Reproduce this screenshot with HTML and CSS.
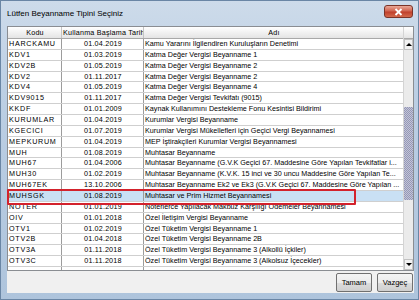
FILE: index.html
```html
<!doctype html>
<html>
  <head>
    <meta charset="utf-8">
    <title>Lütfen Beyanname Tipini Seçiniz</title>
    <link rel="stylesheet" href="styles.css">
  </head>
  <body>
    <div class="window">
      <div class="titlebar">
        <span class="title">Lütfen Beyanname Tipini Seçiniz</span>
        <div class="close">
          <svg width="9" height="8" viewBox="0 0 9 8"><path d="M1.5 1 L7.5 7 M7.5 1 L1.5 7" stroke="#fff" stroke-width="1.8"/></svg>
        </div>
      </div>
      <div class="client">
        <div class="grid">
          <div class="table">
            <div class="row head"><div>Kodu</div><div>Kullanma Başlama Tarihi</div><div>Adı</div></div>
            <div class="row"><div>HARCKAMU</div><div>01.04.2019</div><div>Kamu Yararını İlgilendiren Kuruluşların Denetimi</div></div>
            <div class="row"><div>KDV1</div><div>01.03.2019</div><div>Katma Değer Vergisi Beyanname 1</div></div>
            <div class="row"><div>KDV2B</div><div>01.05.2019</div><div>Katma Değer Vergisi Beyanname 2</div></div>
            <div class="row"><div>KDV2</div><div>01.11.2017</div><div>Katma Değer Vergisi Beyanname 2</div></div>
            <div class="row"><div>KDV4</div><div>01.05.2019</div><div>Katma Değer Vergisi Beyanname 4</div></div>
            <div class="row"><div>KDV9015</div><div>01.11.2017</div><div>Katma Değer Vergisi Tevkifatı (9015)</div></div>
            <div class="row"><div>KKDF</div><div>01.01.2009</div><div>Kaynak Kullanımını Destekleme Fonu Kesintisi Bildirimi</div></div>
            <div class="row"><div>KURUMLAR</div><div>01.04.2019</div><div>Kurumlar Vergisi Beyanname</div></div>
            <div class="row"><div>KGECICI</div><div>01.07.2019</div><div>Kurumlar Vergisi Mükellefleri için Geçici Vergi Beyannamesi</div></div>
            <div class="row"><div>MEPKURUM</div><div>01.04.2019</div><div>MEP İştirakçileri Kurumlar Vergisi Beyannamesi</div></div>
            <div class="row"><div>MUH</div><div>01.08.2019</div><div>Muhtasar Beyanname</div></div>
            <div class="row"><div>MUH67</div><div>01.04.2006</div><div>Muhtasar Beyanname (G.V.K Geçici 67. Maddesine Göre Yapılan Tevkifatlar i...</div></div>
            <div class="row"><div>MUH30</div><div>01.02.2019</div><div>Muhtasar Beyanname (K.V.K. 15 inci ve 30 uncu Maddesine Göre Yapılan Te...</div></div>
            <div class="row"><div>MUH67EK</div><div>13.10.2006</div><div>Muhtasar Beyanname Ek2 ve Ek3 (G.V.K Geçici 67. Maddesine Göre Yapılan ...</div></div>
            <div class="row sel"><div>MUHSGK</div><div>01.08.2019</div><div>Muhtasar ve Prim Hizmet Beyannamesi</div></div>
            <div class="row"><div>NOTER</div><div>01.01.2019</div><div>Noterlerce Yapılacak Makbuz Karşılığı Ödemeler Beyannamesi</div></div>
            <div class="row"><div>OIV</div><div>01.01.2018</div><div>Özel İletişim Vergisi Beyanname</div></div>
            <div class="row"><div>OTV1</div><div>01.02.2019</div><div>Özel Tüketim Vergisi Beyanname 1</div></div>
            <div class="row"><div>OTV2B</div><div>01.04.2018</div><div>Özel Tüketim Vergisi Beyanname 2B</div></div>
            <div class="row"><div>OTV3A</div><div>01.11.2018</div><div>Özel Tüketim Vergisi Beyanname 3 (Alkollü İçkiler)</div></div>
            <div class="row"><div>OTV3C</div><div>01.11.2018</div><div>Özel Tüketim Vergisi Beyanname 3 (Alkolsuz İçecekler)</div></div>
            <div class="row fill"><div></div><div></div><div></div></div>
          </div>
          <div class="scrollbar">
            <div class="sb-head"></div>
            <div class="sb-btn"><span class="arrow up"></span></div>
            <div class="sb-track top"></div>
            <div class="sb-thumb"></div>
            <div class="sb-track"></div>
            <div class="sb-btn"><span class="arrow down"></span></div>
          </div>
          <div class="mark"></div>
        </div>
        <div class="buttons">
          <button>Tamam</button>
          <button>Vazgeç</button>
        </div>
      </div>
    </div>
  </body>
</html>
```

FILE: styles.css
```css
* { margin: 0; padding: 0; box-sizing: border-box; }
body { width: 419px; height: 300px; overflow: hidden; font-family: "Liberation Sans", Arial, sans-serif; color: #000; }

/* window frame */
.window {
  width: 419px;
  height: 300px;
  display: flex;
  flex-direction: column;
  background: linear-gradient(#cddbea, #bccfe4 30%, #aec4dc);
  border: 1px solid #6a86a5;
  padding: 0 4px 6px 6px;
}

.titlebar {
  height: 25px;
  display: flex;
  align-items: flex-start;
  justify-content: space-between;
}

.title { font-size: 8px; line-height: 8px; margin-top: 9px; }

.close {
  width: 29px;
  height: 13px;
  margin: 4px 1px 0 0;
  border: 1px solid #7a3328;
  border-radius: 3px;
  background: linear-gradient(#e9a898, #d06450 45%, #c0402c 55%, #d36a4c);
  display: flex;
  align-items: center;
  justify-content: center;
}

.client {
  flex: 1;
  background: #f0f0f0;
  display: flex;
  flex-direction: column;
}

/* grid */
.grid {
  height: 245px;
  border: 1px solid #8a8d92;
  background: #fff;
  display: flex;
  position: relative;
}

.table { flex: 1; display: flex; flex-direction: column; }

.row {
  flex: none;
  display: grid;
  grid-template-columns: 54px 82px 1fr;
  height: 10.86px;
  font-size: 7.2px;
  line-height: 10px;
  border-bottom: 1px solid #cfcfcf;
}

.row > div {
  border-right: 1px solid #9c9c9c;
  white-space: nowrap;
  overflow: hidden;
  padding-left: 1px;
}

.row > div:first-child { letter-spacing: 0.7px; }
.row > div:nth-child(2) { text-align: center; letter-spacing: 0.2px; }
.row > div:last-child { border-right: none; }

.row.head {
  height: 12px;
  line-height: 11px;
  background: linear-gradient(#ffffff, #f1f1f1 50%, #e4e4e4);
  border-bottom: 1px solid #a8a8a8;
}
.row.head > div { text-align: center; letter-spacing: 0.2px; border-right-color: #c4c4c4; }

.row.sel { background: #c9e0f4; }
.row.fill { flex: 1; height: auto; border-bottom: none; }

/* red annotation box */
.mark {
  position: absolute;
  left: -1px;
  top: 162px;
  width: 349px;
  height: 16px;
  border: 2px solid #d3222c;
  border-radius: 1px;
}

/* scrollbar */
.scrollbar {
  width: 10px;
  display: flex;
  flex-direction: column;
  border-left: 1px solid #d4d4d4;
  background: #ebebeb;
}
.sb-head { height: 12px; background: linear-gradient(#ffffff, #e4e4e4); border-bottom: 1px solid #a8a8a8; }
.sb-btn {
  height: 11px;
  background: #f2f2f2;
  border: 1px solid #c2c2c2;
  display: flex;
  align-items: center;
  justify-content: center;
}
.arrow { width: 0; height: 0; border-left: 3px solid transparent; border-right: 3px solid transparent; }
.arrow.up { border-bottom: 3px solid #000; }
.arrow.down { border-top: 3px solid #000; }
.sb-track { flex: 1; }
.sb-track.top { flex: none; height: 57px; }
.sb-thumb {
  height: 93px;
  background: repeating-conic-gradient(#9597b6 0 25%, #c3c5d8 0 50%) 0 0 / 2px 2px;
}

/* buttons */
.buttons {
  display: flex;
  justify-content: flex-end;
  gap: 5px;
  padding: 2px 1px 0 0;
}
.buttons button {
  width: 36px;
  height: 19px;
  font: 7.5px "Liberation Sans", Arial, sans-serif;
  color: #000;
  border: 1px solid #707070;
  border-radius: 2px;
  background: linear-gradient(#f4f4f4, #ebebeb 50%, #dddddd 50%, #cfcfcf);
}
```
